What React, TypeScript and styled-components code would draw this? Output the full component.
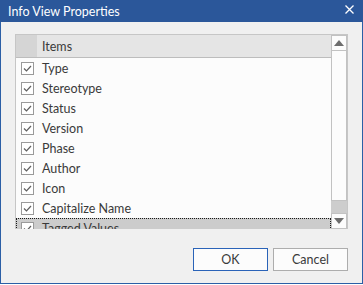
import React from 'react';
import styled, { createGlobalStyle } from 'styled-components';

const items = [
  'Type',
  'Stereotype',
  'Status',
  'Version',
  'Phase',
  'Author',
  'Icon',
  'Capitalize Name',
  'Tagged Values',
];

const FONT = '"Lato", "Noto Sans", sans-serif';

const GlobalStyle = createGlobalStyle`
  html, body {
    margin: 0;
    padding: 0;
    background: #ffffff;
  }
  body {
    font-family: ${FONT};
    font-size: 12.5px;
  }
`;

const Check = () => (
  <svg width="11" height="11" viewBox="0 0 11 11">
    <polyline points="2,5.5 4.5,8 9,3" fill="none" stroke="#5f5f5f" strokeWidth="1.2" />
  </svg>
);

const Arrow = ({ down }: { down?: boolean }) => (
  <svg width="10" height="6" viewBox="0 0 10 6">
    <polygon points={down ? '0,0 10,0 5,6' : '0,6 10,6 5,0'} fill="#6d6d6d" />
  </svg>
);

const App: React.FC = () => {
  return (
    <>
      <GlobalStyle />
      <Window>
        <TitleBar>
          <Title>Info View Properties</Title>
          <CloseIcon>
            <svg width="9" height="9" viewBox="0 0 9 9">
              <path d="M0.5 0.5 L8.5 8.5 M8.5 0.5 L0.5 8.5" stroke="#fff" strokeWidth="1.3" />
            </svg>
          </CloseIcon>
        </TitleBar>
        <Body>
          <Grid>
            <GridMain>
              <Header>
                <HeaderCheckCol />
                <HeaderLabel>Items</HeaderLabel>
              </Header>
              <Rows>
                {items.map((item, i) => (
                  <Row key={item} $selected={i === items.length - 1}>
                    <CheckBox>
                      <Check />
                    </CheckBox>
                    <RowLabel>{item}</RowLabel>
                  </Row>
                ))}
              </Rows>
            </GridMain>
            <ScrollBar>
              <ScrollButton>
                <Arrow />
              </ScrollButton>
              <Thumb />
              <Track />
              <ScrollButton>
                <Arrow down />
              </ScrollButton>
            </ScrollBar>
          </Grid>
          <ButtonRow>
            <Button $primary>OK</Button>
            <Button>Cancel</Button>
          </ButtonRow>
        </Body>
      </Window>
    </>
  );
};

export default App;

const Window = styled.div`
  box-sizing: border-box;
  width: 363px;
  height: 284px;
  border: 1px solid #2b5fa6;
  border-top: none;
  background: #f0f0f0;
  display: flex;
  flex-direction: column;
`;

const TitleBar = styled.div`
  height: 22px;
  background: #2b579a;
  display: flex;
  align-items: center;
  justify-content: space-between;
  padding: 0 9px 0 8px;
  margin: 0 -1px;
`;

const Title = styled.span`
  color: #ffffff;
  line-height: 22px;
  padding-top: 2px;
`;

const CloseIcon = styled.span`
  display: flex;
  margin-top: -3px;
`;

const Body = styled.div`
  flex: 1;
  display: flex;
  flex-direction: column;
  padding: 12px 14px 0 14px;
`;

const Grid = styled.div`
  box-sizing: border-box;
  height: 195px;
  border: 1px solid #c6c6c6;
  border-bottom: none;
  background: #fcfcfc;
  display: flex;
`;

const GridMain = styled.div`
  flex: 1;
  display: flex;
  flex-direction: column;
  overflow: hidden;
`;

const Header = styled.div`
  height: 22px;
  display: flex;
  background: #e5e5e5;
  border-bottom: 1px solid #bdbdbd;
  flex-shrink: 0;
`;

const HeaderCheckCol = styled.div`
  width: 21px;
  background: #d5d5d5;
`;

const HeaderLabel = styled.div`
  padding-left: 5px;
  line-height: 23px;
  color: #3a3a3a;
`;

const Rows = styled.div`
  flex: 1;
  overflow: hidden;
`;

const Row = styled.div<{ $selected?: boolean }>`
  box-sizing: border-box;
  height: 20px;
  display: flex;
  align-items: center;
  padding-left: 5px;
  background: ${(p) => (p.$selected ? '#cccccc' : 'transparent')};
  outline: ${(p) => (p.$selected ? '1px dotted #1a1a1a' : 'none')};
  outline-offset: -1px;
`;

const CheckBox = styled.div`
  box-sizing: border-box;
  width: 13px;
  height: 13px;
  border: 1px solid #9a9a9a;
  background: #ffffff;
  display: flex;
  align-items: center;
  justify-content: center;
`;

const RowLabel = styled.span`
  padding-left: 8px;
  padding-top: 1px;
  color: #3a3a3a;
`;

const ScrollBar = styled.div`
  width: 16px;
  display: flex;
  flex-direction: column;
  background: #cdcdcd;
`;

const ScrollButton = styled.div`
  box-sizing: border-box;
  height: 16px;
  border: 1px solid #c2c2c2;
  background: #fcfcfc;
  display: flex;
  align-items: center;
  justify-content: center;
`;

const Thumb = styled.div`
  box-sizing: border-box;
  height: 150px;
  border: 1px solid #c2c2c2;
  border-top: none;
  background: #fcfcfc;
`;

const Track = styled.div`
  flex: 1;
`;

const ButtonRow = styled.div`
  display: flex;
  justify-content: flex-end;
  gap: 5px;
  margin-top: 19px;
`;

const Button = styled.button<{ $primary?: boolean }>`
  box-sizing: border-box;
  width: 75px;
  height: 23px;
  font-family: ${FONT};
  font-size: 12.5px;
  color: #3a3a3a;
  background: #fcfcfc;
  border: 1px solid ${(p) => (p.$primary ? '#2a63b8' : '#adadad')};
  padding: 0;
`;
